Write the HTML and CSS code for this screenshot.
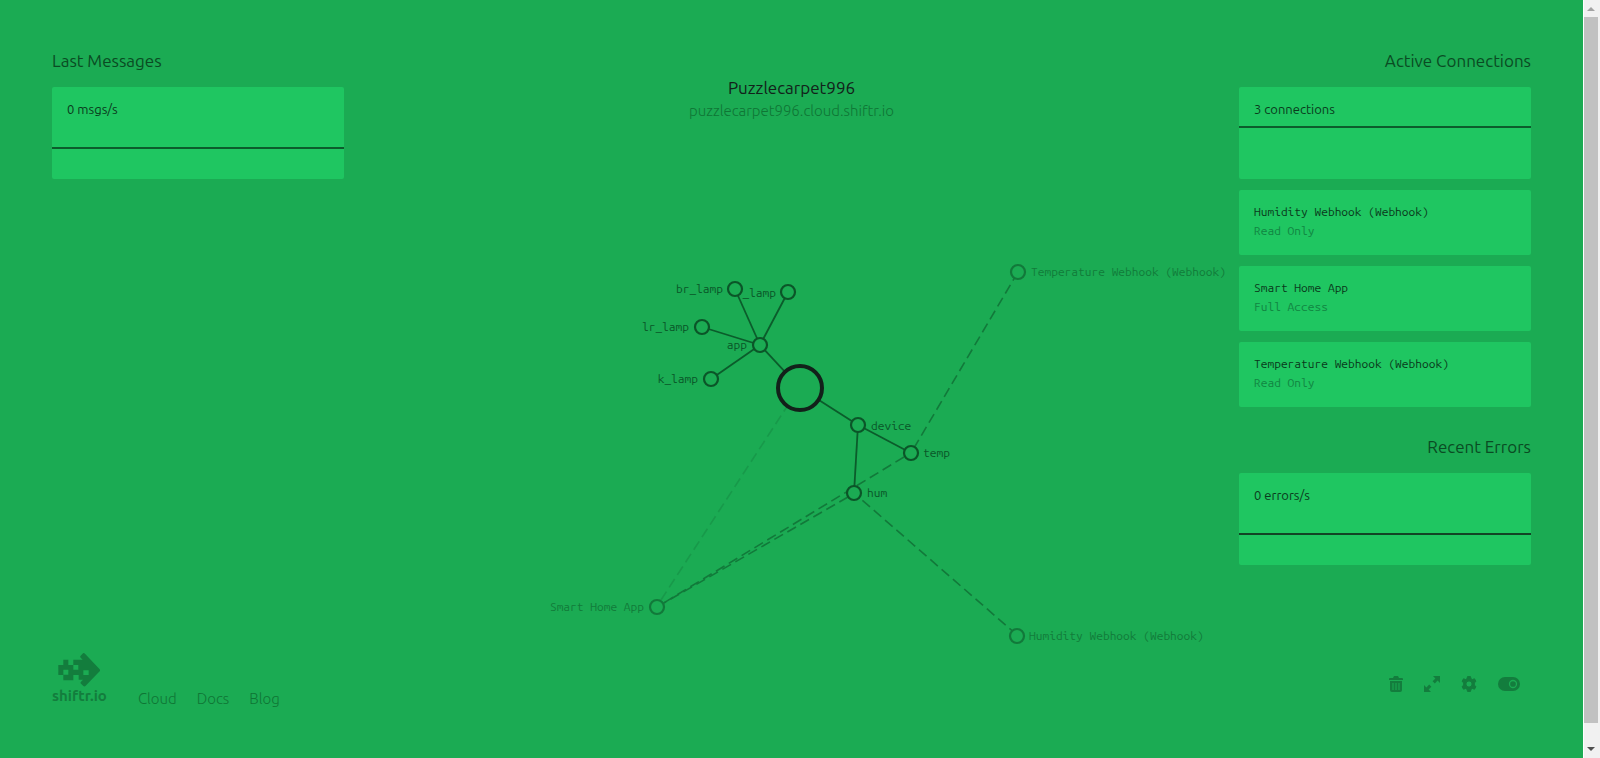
FILE: index.html
```
<!DOCTYPE html>
<html lang="en">
<head>
<meta charset="utf-8">
<meta name="viewport" content="width=device-width, initial-scale=1">
<title>Puzzlecarpet996</title>
<link rel="stylesheet" href="styles.css">
</head>
<body>
<div class="stage">
  <svg class="graph" viewBox="0 0 1583 758" role="img" aria-label="Topic graph">
    <g class="link-faint"><line x1="661" y1="600" x2="788" y2="405"/></g>
    <g class="link-dashed">
      <line x1="904" y1="457" x2="657" y2="607"/>
      <line x1="848" y1="497" x2="657" y2="607"/>
      <line x1="1018" y1="272" x2="911" y2="453"/>
      <line x1="1017" y1="635" x2="854" y2="493"/>
    </g>
    <g class="link">
      <line x1="735" y1="289" x2="760" y2="345"/>
      <line x1="788" y1="292" x2="760" y2="345"/>
      <line x1="702" y1="327" x2="760" y2="345"/>
      <line x1="711" y1="379" x2="760" y2="345"/>
      <line x1="760" y1="345" x2="800" y2="388"/>
      <line x1="800" y1="388" x2="858" y2="425"/>
      <line x1="858" y1="425" x2="911" y2="453"/>
      <line x1="858" y1="425" x2="854" y2="493"/>
    </g>
    <g class="topic">
      <circle cx="788" cy="292" r="7"/><text class="before" x="776" y="297">_lamp</text>
      <circle cx="735" cy="289" r="7"/><text class="before" x="723" y="293">br_lamp</text>
      <circle cx="702" cy="327" r="7"/><text class="before" x="689" y="331">lr_lamp</text>
      <circle cx="711" cy="379" r="7"/><text class="before" x="698" y="383">k_lamp</text>
      <circle cx="760" cy="345" r="7"/><text class="before" x="747" y="349">app</text>
      <circle cx="858" cy="425" r="7"/><text x="871" y="430">device</text>
      <circle cx="911" cy="453" r="7"/><text x="923" y="457">temp</text>
      <circle cx="854" cy="493" r="7"/><text x="867" y="497">hum</text>
    </g>
    <g class="client">
      <circle cx="657" cy="607" r="7"/><text class="before" x="644" y="611">Smart Home App</text>
      <circle cx="1018" cy="272" r="7"/><text x="1031" y="276">Temperature Webhook (Webhook)</text>
      <circle cx="1017" cy="636" r="7"/><text x="1029" y="640">Humidity Webhook (Webhook)</text>
    </g>
    <circle class="root" cx="800" cy="388" r="22"/>
  </svg>

  <main class="columns">
    <section class="panel">
      <h2>Last Messages</h2>
      <div class="card chart">
        <p>0 msgs/s</p>
        <svg class="spark" aria-hidden="true"><line x1="0" y1="61" x2="100%" y2="61"/></svg>
      </div>
    </section>

    <header class="title">
      <h1>Puzzlecarpet996</h1>
      <p>puzzlecarpet996.cloud.shiftr.io</p>
    </header>

    <div class="side">
      <section class="panel right">
        <h2>Active Connections</h2>
        <div class="card chart">
          <p>3 connections</p>
          <svg class="spark" aria-hidden="true"><line x1="0" y1="40" x2="100%" y2="40"/></svg>
        </div>
        <div class="card entry"><p>Humidity Webhook (Webhook)</p><p class="access">Read Only</p></div>
        <div class="card entry"><p>Smart Home App</p><p class="access">Full Access</p></div>
        <div class="card entry"><p>Temperature Webhook (Webhook)</p><p class="access">Read Only</p></div>
      </section>
      <section class="panel right">
        <h2>Recent Errors</h2>
        <div class="card chart errors">
          <p>0 errors/s</p>
          <svg class="spark" aria-hidden="true"><line x1="0" y1="61" x2="100%" y2="61"/></svg>
        </div>
      </section>
    </div>
  </main>

  <footer class="footer">
    <a class="logo" href="#">
      <svg width="42" height="34" viewBox="0 0 126 102" aria-hidden="true">
        <path fill-rule="evenodd" d="M68 8l7-7q3-2 6 1l44 47q3 3 0 6L83 98q-3 4-7 1l-7-7q-3-3 0-6l6-6H62V66H46v16H16V66H1V36h15V20h15v16h15V20h28l-6-6q-3-3 0-6zM46 36v14h15V36zM16 50v15h15V50zM76 52v14h16V52z"/>
      </svg>
      <span>shiftr.io</span>
    </a>
    <nav class="nav">
      <a href="#">Cloud</a>
      <a href="#">Docs</a>
      <a href="#">Blog</a>
    </nav>
    <div class="tools">
      <button type="button" aria-label="Clear">
        <svg width="14" height="16" viewBox="0 0 14 16"><path fill-rule="evenodd" d="M5 0h4l1 2h3q1 0 1 1v1H0V3q0-1 1-1h3zM1 5h12v9q0 2-2 2H3q-2 0-2-2zM3.500 7v7h1V7zM6.500 7v7h1V7zM9.500 7v7h1V7z"/></svg>
      </button>
      <button type="button" aria-label="Full screen">
        <svg width="16" height="16" viewBox="0 0 16 16"><path d="M9 0h7v7l-2.400-2.400L10.800 7.400 8.600 5.200l2.800-2.800zM7 16H0V9l2.400 2.400L5.200 8.600l2.200 2.200-2.800 2.800z"/></svg>
      </button>
      <button type="button" aria-label="Settings">
        <svg width="16" height="16" viewBox="0 0 16 16"><path fill-rule="evenodd" stroke="currentColor" stroke-linejoin="round" d="M6.500.6h3l.5 2.200 1.300.8 2.200-.8 1.400 2.600-1.600 1.500v2.200l1.600 1.500-1.400 2.600-2.200-.8-1.300.8-.5 2.200h-3L6 13.200l-1.300-.8-2.200.8-1.400-2.600 1.600-1.500V6.900L1.100 5.400l1.400-2.600 2.200.8L6 2.800zM8 4.900a3.100 3.100 0 1 0 0 6.200 3.100 3.100 0 0 0 0-6.200z"/></svg>
      </button>
      <button type="button" aria-label="Toggle theme">
        <svg width="22" height="14" viewBox="0 0 22 14"><rect width="22" height="14" rx="7"/><circle class="knob" cx="15" cy="7" r="3.500"/></svg>
      </button>
    </div>
  </footer>
</div>
<div class="scrollbar" aria-hidden="true">
  <svg class="arrow up" width="8" height="4" viewBox="0 0 8 4"><path d="M0 4l4-4 4 4z"/></svg>
  <div class="thumb"></div>
  <svg class="arrow" width="8" height="4" viewBox="0 0 8 4"><path d="M0 0h8L4 4z"/></svg>
</div>
</body>
</html>
```
FILE: styles.css
```
:root {
  --bg: #1bab53;
  --card: #1fc661;
  --ink: #12211a;
  --strong: #0b5528;
  --sans: Ubuntu, "Noto Sans", "Open Sans", sans-serif;
  --mono: "Ubuntu Mono", "DejaVu Sans Mono", monospace;
}

* { box-sizing: border-box; }

body {
  display: flex;
  min-height: 100vh;
  margin: 0;
  background: var(--bg);
  font-family: var(--sans);
  color: var(--ink);
}

h1, h2, p { margin: 0; font-weight: 400; }

a { color: inherit; text-decoration: none; }

.stage {
  position: relative;
  display: flex;
  flex: 1;
  flex-direction: column;
  padding: 51px 52px;
}

.graph {
  position: absolute;
  inset: 0;
  width: 100%;
  height: 100%;
  font: 12px var(--mono);
}

.link line { stroke: #0b5c2b; stroke-width: 1.8; }
.link-dashed line { stroke: #12793a; stroke-width: 1.6; stroke-dasharray: 10 5; }
.link-faint line { stroke: #18994a; stroke-width: 1.6; stroke-dasharray: 10 5; }
.graph circle { fill: var(--bg); stroke-width: 2.2; }
.graph text { fill: #0a5729; }
.graph .before { text-anchor: end; }
.topic circle { stroke: var(--strong); }
.client circle { stroke: #12793a; }
.graph .client text { fill: #127b3a; }
.graph .root { stroke: var(--ink); stroke-width: 4; }

.columns {
  position: relative;
  display: grid;
  flex: 1;
  grid-template-columns: 292px 1fr 292px;
  align-items: start;
}

.panel { display: flex; flex-direction: column; gap: 11px; }
.panel h2 { margin-bottom: 5px; font-size: 17px; line-height: 20px; color: #0a4b23; }
.right h2 { text-align: right; }
.side { display: flex; flex-direction: column; gap: 30px; }

.card {
  position: relative;
  padding: 14px 15px;
  border-radius: 2px;
  background: var(--card);
}
.card p { font-size: 13px; line-height: 16px; color: #0a3a1c; }
.chart { min-height: 92px; }
.spark { position: absolute; inset: 0; width: 100%; height: 100%; }
.spark line { stroke: #0c5c2c; stroke-width: 2; }
.errors .spark line { stroke: #124425; }
.entry { min-height: 65px; font-family: var(--mono); }
.entry p { font-size: 12px; }
.card .access { margin-top: 3px; color: #118541; }

.title { padding-top: 25px; text-align: center; line-height: 23px; }
.title h1 { font-size: 17px; }
.title p { font-size: 15px; font-weight: 300; color: #0f7535; }

.footer {
  position: relative;
  display: flex;
  align-items: flex-end;
  color: #137d3d;
}
.logo {
  display: flex;
  flex-direction: column;
  align-items: center;
  gap: 1px;
  padding-bottom: 3px;
  font-size: 15px;
  font-weight: 700;
  line-height: 16px;
}
svg { display: block; fill: currentColor; }
.nav { display: flex; gap: 20px; margin-left: 31px; font-size: 15px; font-weight: 300; line-height: 16px; color: #0f7535; }
.tools { display: flex; align-items: center; gap: 21px; margin: 0 11px 15px auto; }
.tools button { padding: 0; border: 0; background: none; color: inherit; }
.knob { fill: none; stroke: var(--bg); stroke-width: 1.300; }

.scrollbar {
  display: flex;
  flex-direction: column;
  align-items: center;
  gap: 6px;
  width: 17px;
  padding: 7px 2px 7px 0;
  border-left: 1px solid #fff;
  background: #f1f1f1;
  color: #505050;
}
.up { color: #a3a3a3; }
.thumb { flex: 1; width: 100%; margin-bottom: 18px; background: #c1c1c1; }
```
